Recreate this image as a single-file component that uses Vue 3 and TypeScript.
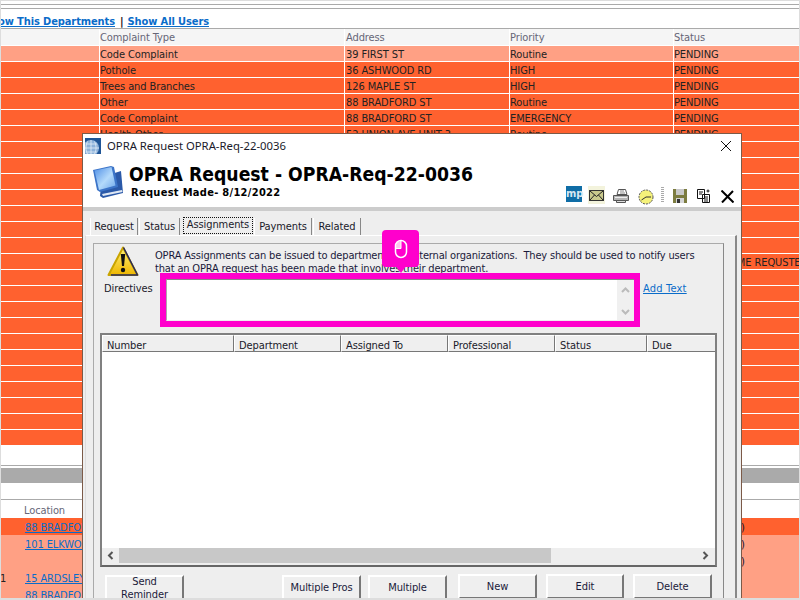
<script setup lang="ts">
const rows = [
  ['Code Complaint', '39 FIRST ST', 'Routine', 'PENDING'],
  ['Pothole', '36 ASHWOOD RD', 'HIGH', 'PENDING'],
  ['Trees and Branches', '126 MAPLE ST', 'HIGH', 'PENDING'],
  ['Other', '88 BRADFORD ST', 'Routine', 'PENDING'],
  ['Code Complaint', '88 BRADFORD ST', 'EMERGENCY', 'PENDING'],
  ['Health Other', '52 UNION AVE UNIT 3', 'Routine', 'PENDING'],
  ...Array.from({ length: 7 }, () => ['', '', '', '']),
  ['', '', '', 'PENDING - TIME REQUSTED'],
  ...Array.from({ length: 11 }, () => ['', '', '', '']),
]

const lowerRows = [
  { tone: 'hot', mark: '', link: '88 BRADFORD ST', end: ')' },
  { tone: 'soft', mark: '', link: '101 ELKWOOD AVE', end: ')' },
  { tone: 'soft', mark: '', link: '', end: ')' },
  { tone: 'soft', mark: '1', link: '15 ARDSLEY', end: '' },
  { tone: 'soft', mark: '', link: '88 BRADFORD ST', end: '' },
]

const tabs = ['Request', 'Status', 'Assignments', 'Payments', 'Related']
const columns = ['Number', 'Department', 'Assigned To', 'Professional', 'Status', 'Due']
</script>

<template>
  <div class="page">
    <div class="top-rules" />
    <div class="links">
      <a class="bold-link">Show This Departments</a>
      <span class="pipe">|</span>
      <a class="bold-link">Show All Users</a>
    </div>

    <div class="row head">
      <span class="c0" />
      <span class="c1">Complaint Type</span>
      <span class="c2">Address</span>
      <span class="c3">Priority</span>
      <span class="c4">Status</span>
    </div>
    <div v-for="(r, i) in rows" :key="i" class="row" :class="i === 0 ? 'soft' : 'hot'">
      <span class="c0" />
      <span class="c1">{{ r[0] }}</span>
      <span class="c2">{{ r[1] }}</span>
      <span class="c3">{{ r[2] }}</span>
      <span class="c4">{{ r[3] }}</span>
    </div>

    <div class="gap-rule" />
    <div class="gray-band" />
    <div class="lower-blank" />
    <div class="lower-head">Location</div>
    <div v-for="(r, i) in lowerRows" :key="'l' + i" class="lower-row" :class="r.tone">
      <span class="mark">{{ r.mark }}</span>
      <a class="addr">{{ r.link }}</a>
      <span class="end">{{ r.end }}</span>
    </div>

    <section class="window">
      <header class="titlebar">
        <svg class="globe" width="16" height="16" viewBox="0 0 16 16">
          <rect width="16" height="16" fill="#1f5596" />
          <circle cx="6" cy="10" r="8" fill="#8db2da" />
          <path d="M0 10h14M1 6h11M1 14h11M6 2v14M2.500 3.500c-2 4-2 9 0 12.500M9.500 3.500c2 4 2 9 0 12.500" stroke="#e3edf7" stroke-width=".8" fill="none" />
        </svg>
        <span class="title-text">OPRA Request OPRA-Req-22-0036</span>
        <svg class="close" width="12" height="12" viewBox="0 0 12 12">
          <path d="M1 1l10 10M11 1L1 11" stroke="#111" stroke-width="1" />
        </svg>
      </header>

      <div class="banner">
        <svg class="books" width="32" height="34" viewBox="0 0 32 34">
          <defs>
            <linearGradient id="bookFace" x1="0" y1="0" x2="1" y2="1">
              <stop offset="0" stop-color="#4f8fe6" />
              <stop offset=".55" stop-color="#b4dafb" />
              <stop offset="1" stop-color="#6ea6ea" />
            </linearGradient>
          </defs>
          <path d="M10 12l19-6 2 22-20 5-3-2z" fill="#2b59a8" />
          <path d="M10 29l20-4 .5 2-19.500 4z" fill="#dfe8f4" />
          <path d="M1 5l18-4 3 1 4 20-18 5-3-2z" fill="#3c74c8" />
          <path d="M2.500 5.500l17-3.500 4 18.500L7 25z" fill="url(#bookFace)" />
        </svg>
        <div class="banner-text">
          <h1>OPRA Request - OPRA-Req-22-0036</h1>
          <p>Request Made- 8/12/2022</p>
        </div>
        <div class="tools">
          <span class="mp">mp</span>
          <svg class="envelope" width="17" height="18" viewBox="0 0 17 18">
            <rect width="17" height="18" fill="#f3f3dc" />
            <rect x="1.500" y="4.500" width="14" height="10" fill="#c9c98c" stroke="#333" />
            <path d="M2 5l6.500 5.500L15 5M2 14l4.500-5M15 14l-4.500-5" fill="none" stroke="#222" />
          </svg>
          <svg class="printer" width="16" height="14" viewBox="0 0 16 14">
            <path d="M5.500.500h7l1.500 5H4z" fill="#fff" stroke="#555" />
            <path d="M7 2h4M7 4h5" stroke="#888" />
            <path d="M.5 6.500h15v5H.5z" fill="#b5b5b5" stroke="#555" />
            <path d="M2 8.500h12" stroke="#eee" />
            <path d="M3.500 11.500h9v2h-9z" fill="#ddd" stroke="#555" />
          </svg>
          <svg class="clock" width="16" height="16" viewBox="0 0 16 16">
            <circle cx="8" cy="8" r="7" fill="#f5f27a" stroke="#555" stroke-dasharray="2 1" />
            <path d="M3.500 11L8 8h5" fill="none" stroke="#333" />
          </svg>
          <span class="sep" />
          <svg class="save" width="14" height="14" viewBox="0 0 14 14">
            <rect width="14" height="14" fill="#7c7c40" />
            <rect x="3" y="0" width="8" height="6" fill="#c9c9c9" />
            <rect x="3" y="9" width="8" height="5" fill="#d5d5d5" />
            <rect x="4" y="10" width="3" height="4" fill="#333" />
          </svg>
          <svg class="copy" width="14" height="14" viewBox="0 0 14 14">
            <path d="M.5.500h7v9h-7zM5.500 5.500h7v8h-7z" fill="#fff" stroke="#111" />
            <path d="M2 3h4M2 5h3M7 8h4M7 10h4M7 12h4M11 .500v3M9.500 2h3" stroke="#111" />
          </svg>
          <svg class="cross" width="13" height="13" viewBox="0 0 13 13">
            <path d="M.5.500l12 12M12 1L1 12.500" stroke="#000" stroke-width="2" />
          </svg>
        </div>
      </div>
      <div class="banner-rule" />

      <div class="body">
        <nav class="tabs">
          <span v-for="t in tabs" :key="t" class="tab" :class="{ active: t === 'Assignments' }">
            <span class="tab-label">{{ t }}</span>
          </span>
        </nav>

        <div class="tab-frame">
          <div class="panel">
            <div class="notice">
              <svg class="warn" width="32" height="31" viewBox="0 0 32 31">
                <defs>
                  <linearGradient id="warnFill" x1="0" y1="0" x2="0" y2="1">
                    <stop offset="0" stop-color="#fff27a" />
                    <stop offset="1" stop-color="#eeb600" />
                  </linearGradient>
                </defs>
                <path d="M16 1.500L30.500 29H1.500z" fill="url(#warnFill)" stroke="#c9a400" stroke-width="2" stroke-linejoin="round" />
                <path d="M16.500 1.500L30.500 29H4" fill="none" stroke="#2a2a5a" stroke-width="1.500" stroke-linejoin="round" />
                <path d="M13.800 8h4.400l-1.200 12h-2z" fill="#111" />
                <circle cx="16" cy="24" r="2.200" fill="#111" />
              </svg>
              <p>OPRA Assignments can be issued to departments or external organizations.&nbsp; They should be used to notify users<br />that an OPRA request has been made that involves their department.</p>
            </div>

            <div class="directives">
              <label>Directives</label>
              <div class="highlight">
                <div class="textbox">
                  <div class="vscroll">
                    <svg width="9" height="6" viewBox="0 0 9 6"><path d="M1 5l3.500-3.500L8 5" fill="none" stroke="#bbb" stroke-width="2" /></svg>
                    <svg width="9" height="6" viewBox="0 0 9 6"><path d="M1 1l3.500 3.500L8 1" fill="none" stroke="#bbb" stroke-width="2" /></svg>
                  </div>
                </div>
              </div>
              <a class="add-text">Add Text</a>
            </div>

            <div class="grid">
              <div class="grid-head">
                <span v-for="c in columns" :key="c" class="col">{{ c }}</span>
              </div>
              <div class="grid-body" />
              <div class="hscroll">
                <svg class="arrow" width="7" height="9" viewBox="0 0 7 9"><path d="M5.500 1L2 4.500 5.500 8" fill="none" stroke="#555" stroke-width="2" /></svg>
                <span class="thumb" />
                <svg class="arrow" width="7" height="9" viewBox="0 0 7 9"><path d="M1.500 1L5 4.500 1.500 8" fill="none" stroke="#555" stroke-width="2" /></svg>
              </div>
            </div>

            <div class="actions">
              <button class="btn reminder"><span>Send<br />Reminder</span></button>
              <button class="btn pros">Multiple Pros</button>
              <button class="btn multi">Multiple</button>
              <button class="btn new">New</button>
              <button class="btn edit">Edit</button>
              <button class="btn del">Delete</button>
            </div>
          </div>
        </div>
      </div>

      <div class="callout">
        <svg width="14" height="20" viewBox="0 0 14 20">
          <path d="M7 2a5 5 0 0 0-5 5v2h5z" fill="#ffc4f0" />
          <rect x="1.500" y="1.500" width="11" height="17" rx="5.500" fill="none" stroke="#fff" stroke-width="1.500" />
          <path d="M2 9.500h5V2" fill="none" stroke="#fff" />
        </svg>
      </div>
      <span class="callout-tail" />
    </section>

    <div class="frame" />
  </div>
</template>

<style>
html, body {
  margin: 0;
  background: #fff;
  overflow: hidden;
}
</style>

<style scoped>
.page {
  position: relative;
  width: 800px;
  height: 600px;
  overflow: hidden;
  background: #fff;
  font-family: "DejaVu Sans", "Noto Sans", sans-serif;
  font-stretch: condensed;
  font-size: 11px;
  letter-spacing: -0.1px;
  color: #222;
}
.frame {
  position: absolute;
  inset: 0;
  border: 1px solid #ddd;
  border-bottom-width: 2px;
  pointer-events: none;
}
.top-rules {
  height: 9px;
  border-bottom: 1px solid #aaa;
  box-sizing: border-box;
  box-shadow: inset 0 -3px 0 #fff, inset 0 -4px 0 #aaa;
}
.links {
  display: flex;
  align-items: flex-end;
  gap: 4px;
  height: 20px;
  margin-left: -16px;
  box-sizing: border-box;
  border-bottom: 1px solid #aaa;
  font-weight: 700;
  line-height: 12px;
}
.bold-link {
  color: #0a6cc9;
  text-decoration: underline;
}
.pipe { color: #111; margin-left: 1px; }

.row {
  display: grid;
  grid-template-columns: 99px 245px 165px 164px 127px;
  height: 16px;
  line-height: 18px;
  white-space: nowrap;
  box-sizing: border-box;
  border-bottom: 1px solid #fff;
}
.row > span {
  border-left: 1px solid #fff;
}
.row > .c0 { border-left: 0; }
.row > .c2 { padding-left: 1px; }
.row.head {
  height: 17px;
  background: #f5f5f5;
  color: #667;
  line-height: 18px;
}
.hot { background: #ff612f; }
.soft { background: #ffa084; }
.row .c4 { min-width: 0; }

.gap-rule {
  height: 21px;
  margin-top: -1px;
  box-sizing: border-box;
  border-bottom: 1px solid #aaa;
}
.gray-band {
  height: 15px;
  margin-top: 2px;
  background: #aaa;
}
.lower-blank {
  height: 17px;
  box-sizing: border-box;
  border-bottom: 1px solid #aaa;
}
.lower-head {
  height: 18px;
  line-height: 22px;
  padding-left: 24px;
  color: #667;
}
.lower-row {
  position: relative;
  height: 17px;
  line-height: 20px;
  white-space: nowrap;
}
.mark {
  position: absolute;
  left: 0;
}
.addr {
  position: absolute;
  left: 25px;
  color: #0a6cc9;
  text-decoration: underline;
}
.end {
  position: absolute;
  left: 741px;
  color: #113;
}

.window {
  position: absolute;
  left: 82px;
  top: 133px;
  width: 660px;
  height: 480px;
  box-sizing: border-box;
  border: 1px solid #7b5a48;
  background: #fff;
  color: #1a1a2a;
}
.titlebar {
  display: flex;
  align-items: center;
  height: 23px;
  padding: 0 9px 0 2px;
}
.globe { flex: none; }
.title-text {
  margin-left: 6px;
  flex: 1;
  font-family: "Noto Sans", sans-serif;
  font-stretch: normal;
  font-size: 11.300px;
  letter-spacing: 0;
}
.banner {
  display: flex;
  align-items: flex-start;
  height: 50px;
  padding-left: 9px;
}
.books { margin-top: 8px; flex: none; }
.banner-text { margin-left: 5px; white-space: nowrap; }
.banner h1 {
  margin: 6px 0 0;
  font-size: 19.200px;
  line-height: 24px;
  letter-spacing: 0;
  color: #000;
  font-weight: 700;
}
.banner p {
  margin: -1px 0 0 2px;
  font-size: 11px;
  line-height: 13px;
  letter-spacing: 0.3px;
  font-weight: 700;
  color: #000;
}
.tools {
  margin-left: auto;
  margin-top: 29px;
  padding-right: 7px;
  display: flex;
  align-items: flex-start;
}
.tools svg { flex: none; }
.mp {
  flex: none;
  width: 16px;
  height: 16px;
  line-height: 16px;
  background: #0f6da6;
  color: #d7e8f2;
  font-weight: 700;
  font-size: 11px;
  text-align: center;
}
.envelope { margin-left: 6px; }
.printer { margin: 3px 0 0 8px; }
.clock { margin: 3px 0 0 9px; }
.sep {
  flex: none;
  width: 3px;
  height: 15px;
  margin: 1px 0 0 7px;
  background: repeating-linear-gradient(#aaa 0 1px, #fff 1px 2px);
}
.save { margin: 3px 0 0 9px; }
.copy { margin: 3px 0 0 10px; }
.cross { margin: 4px 0 0 10px; }
.banner-rule {
  height: 4px;
  background: #ccc;
}
.body {
  height: 400px;
  background: #eee;
  padding-top: 5px;
}
.tabs {
  display: flex;
  align-items: flex-end;
  height: 19px;
  padding-left: 7px;
}
.tab {
  flex: none;
  box-sizing: border-box;
  height: 17px;
  line-height: 17px;
  text-align: center;
  border-right: 1px solid #888;
  border-left: 1px solid #fff;
}
.tab:nth-child(1) { width: 48px; }
.tab:nth-child(2) { width: 41px; margin-left: 1px; }
.tab:nth-child(3) { width: 70px; height: 18px; margin-left: 3px; border: 0; }
.tab:nth-child(4) { width: 58px; margin-left: 1px; }
.tab:nth-child(5) { width: 48px; margin-left: 1px; }
.tab.active .tab-label {
  display: block;
  box-sizing: border-box;
  height: 17px;
  line-height: 15px;
  outline: 1px dotted #111;
  outline-offset: -1px;
}
.tab-frame {
  box-sizing: border-box;
  width: 652px;
  margin-left: 2px;
  height: 370px;
  padding: 7px 0 0 7px;
  border-top: 1px solid #fff;
  border-left: 1px solid #ddd;
  border-right: 2px solid #888;
}
.panel {
  box-sizing: border-box;
  width: 631px;
  height: 362px;
  border-left: 1px solid #aaa;
  border-top: 1px solid #aaa;
  border-right: 1px solid #888;
}
.notice {
  display: flex;
  height: 30px;
  padding: 2px 0 0 13px;
  box-sizing: border-box;
}
.warn { flex: none; }
.notice p {
  margin: 3px 0 0 16px;
  line-height: 13px;
  letter-spacing: -0.17px;
  white-space: nowrap;
  color: #1a1a3a;
}
.directives {
  display: flex;
  align-items: flex-start;
  margin-top: -1px;
  padding-left: 10px;
}
.directives label {
  width: 56px;
  flex: none;
  margin-top: 9px;
  line-height: 14px;
}
.highlight {
  width: 480px;
  height: 54px;
  box-sizing: border-box;
  border: 6px solid #ff00cc;
  flex: none;
  background: #fff;
}
.textbox {
  display: flex;
  justify-content: flex-end;
  height: 100%;
  border-bottom: 1px solid #eee;
  border-left: 1px solid #aaa;
  border-top: 1px solid #888;
  box-sizing: border-box;
}
.vscroll {
  width: 17px;
  background: #f0f0f0;
  display: flex;
  flex-direction: column;
  align-items: center;
  justify-content: space-between;
  padding: 7px 0 5px;
  box-sizing: border-box;
}
.add-text {
  margin: 9px 0 0 3px;
  color: #0a6cc9;
  text-decoration: underline;
  line-height: 14px;
  letter-spacing: 0.2px;
  white-space: nowrap;
}
.grid {
  margin: 6px 0 0 6px;
  width: 617px;
  height: 234px;
  box-sizing: border-box;
  border: 2px solid #808080;
  border-bottom-color: #666;
  display: flex;
  flex-direction: column;
  background: #fff;
}
.grid-head {
  display: grid;
  grid-template-columns: 132px 107px 107px 107px 92px 1fr;
  height: 17px;
  flex: none;
  background: #efefef;
}
.col {
  padding-left: 4px;
  line-height: 20px;
  border-top: 1px solid #fff;
  border-left: 1px solid #fff;
  border-right: 1px solid #777;
  border-bottom: 1px solid #777;
  overflow: hidden;
  box-sizing: border-box;
}
.col:last-child { border-right: 0; }
.grid-body { flex: 1; }
.hscroll {
  display: flex;
  align-items: center;
  height: 15px;
  flex: none;
  background: #eee;
  padding: 0 6px 0 0;
  border-bottom: 2px solid #eee;
}
.hscroll .arrow:first-child { margin: 0 5px; }
.hscroll .arrow:last-child { margin-left: auto; }
.thumb {
  width: 432px;
  height: 15px;
  background: #c8c8c8;
}
.actions {
  display: flex;
  align-items: flex-start;
  padding: 8px 0 0 11px;
}
.btn {
  flex: none;
  width: 79px;
  height: 25px;
  padding: 0;
  font: inherit;
  letter-spacing: inherit;
  color: #1a1a3a;
  background: #efefef;
  box-sizing: border-box;
  border: 2px solid;
  border-color: #fff #777 #777 #fff;
  line-height: 13px;
}
.btn.reminder span { display: block; margin-top: -2px; }
.btn.pros { margin-left: 98px; }
.btn.multi { margin-left: 7px; }
.btn.new { margin-left: 11px; margin-top: -1px; }
.btn.edit { margin-left: 9px; margin-top: -1px; width: 78px; }
.btn.del { margin-left: 9px; margin-top: -1px; }

.callout {
  position: absolute;
  left: 299px;
  top: 96px;
  width: 37px;
  height: 37px;
  border-radius: 4px;
  background: #ff00cc;
  display: flex;
  align-items: center;
  justify-content: center;
}
.callout-tail {
  position: absolute;
  left: 312px;
  top: 131px;
  border: 6px solid transparent;
  border-bottom: 0;
  border-top: 8px solid #ff00cc;
}
</style>
